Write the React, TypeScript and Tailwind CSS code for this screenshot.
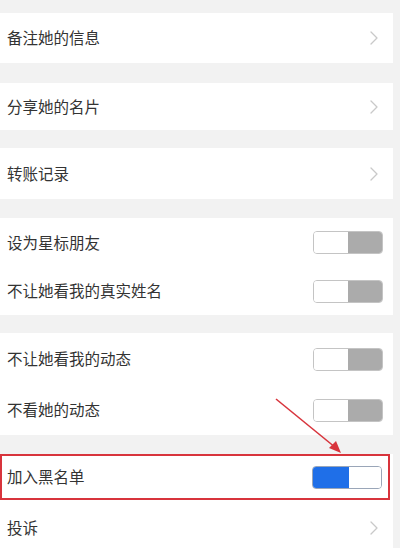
import React from 'react';

const Chevron = () => (
  <svg width="8" height="14" viewBox="0 0 8 14" fill="none" className="mr-[15px]">
    <path d="M1 1l6 6-6 6" stroke="#c9c9c9" strokeWidth="1.3" strokeLinecap="round" strokeLinejoin="round" />
  </svg>
);

const Toggle = ({ on }: { on?: boolean }) =>
  on ? (
    <div className="mr-[10px] flex h-[23px] w-[70px] overflow-hidden rounded-[4px] border border-[#9aa6b8]">
      <div className="w-[36px] bg-[#1f6fe8]" />
      <div className="flex-1 bg-white" />
    </div>
  ) : (
    <div className="mr-[10px] flex h-[23px] w-[70px] overflow-hidden rounded-[4px] border border-[#c4c4c4]">
      <div className="w-[34px] bg-white" />
      <div className="flex-1 bg-[#ababab]" />
    </div>
  );

const Row = ({ label, h = 'h-[48px]', right }: { label: string; h?: string; right: React.ReactNode }) => (
  <div className={`flex items-center justify-between pl-[7px] ${h}`}>
    <span className="text-[15.5px] text-[#333]">{label}</span>
    {right}
  </div>
);

export default function App() {
  return (
    <div
      className="relative h-[548px] w-[400px] overflow-hidden bg-[#f2f2f2] pt-[13px]"
      style={{ fontFamily: '"Noto Sans CJK SC", "Noto Sans", sans-serif' }}
    >
      <div className="w-[393px]">
        <div className="bg-white">
          <Row label="备注她的信息" h="h-[50px]" right={<Chevron />} />
        </div>
        <div className="mt-[20px] bg-white">
          <Row label="分享她的名片" h="h-[47px]" right={<Chevron />} />
        </div>
        <div className="mt-[18px] bg-white">
          <Row label="转账记录" h="h-[51px]" right={<Chevron />} />
        </div>
        <div className="mt-[19px] bg-white">
          <Row label="设为星标朋友" h="h-[49px]" right={<Toggle />} />
          <Row label="不让她看我的真实姓名" right={<Toggle />} />
        </div>
        <div className="mt-[18px] bg-white">
          <Row label="不让她看我的动态" h="h-[52px]" right={<Toggle />} />
          <Row label="不看她的动态" h="h-[50px]" right={<Toggle />} />
        </div>
        <div className="mt-[19px] bg-white">
          <div className="flex h-[46px] w-[390px] items-center justify-between border-2 border-[#d8343c] pl-[5px]">
            <span className="text-[15.5px] text-[#333]">加入黑名单</span>
            <div className="mr-[6px] flex h-[23px] w-[70px] overflow-hidden rounded-[4px] border border-[#9aa6b8]">
              <div className="w-[36px] bg-[#1f6fe8]" />
              <div className="flex-1 bg-white" />
            </div>
          </div>
          <Row label="投诉" h="h-[56px]" right={<Chevron />} />
        </div>
      </div>

      {/* red annotation arrow */}
      <svg className="absolute left-0 top-0" width="400" height="548" viewBox="0 0 400 548">
        <line x1="276" y1="399" x2="336" y2="448" stroke="#d8343c" strokeWidth="1.6" />
        <polygon points="341,453 329,448 336,441" fill="#d8343c" />
      </svg>
    </div>
  );
}
